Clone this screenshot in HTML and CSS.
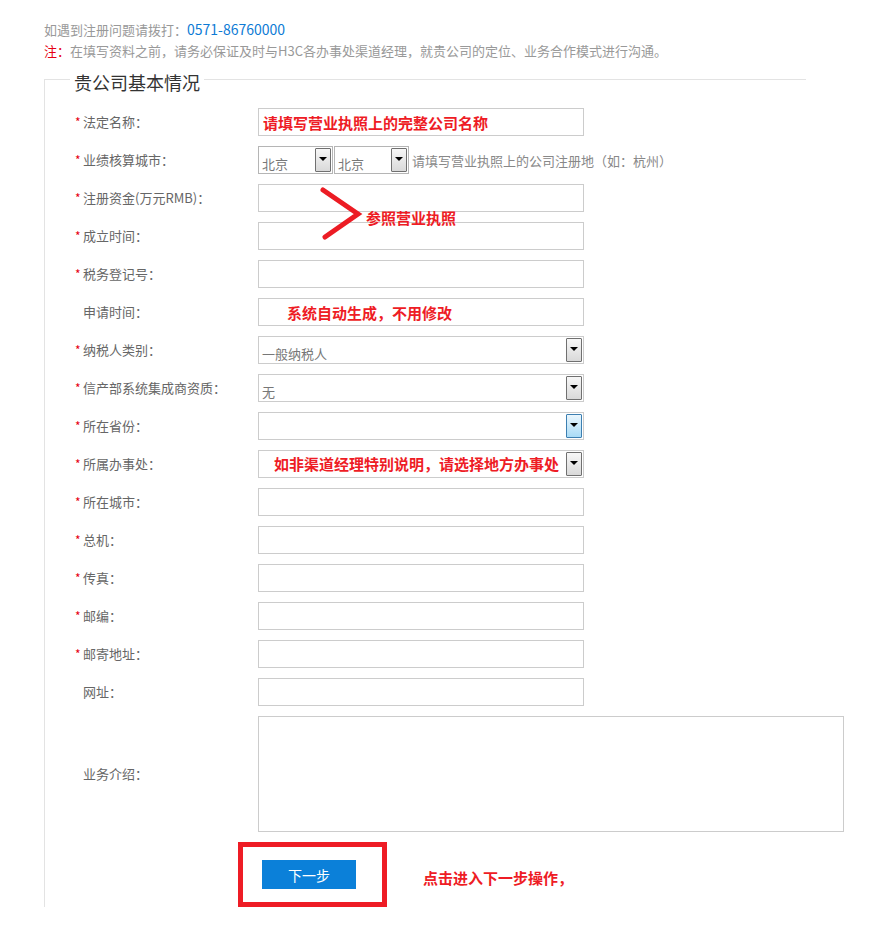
FILE: index.html
```html
<!DOCTYPE html>
<html lang="zh-CN">
<head>
  <meta charset="UTF-8">
  <title>注册 - 贵公司基本情况</title>
  <link rel="stylesheet" href="styles.css">
</head>
<body>
<div class="page">
  <p class="tip">如遇到注册问题请拨打：<span class="phone">0571-86760000</span></p>
  <p class="note"><span class="note-mark">注：</span>在填写资料之前，请务必保证及时与H3C各办事处渠道经理，就贵公司的定位、业务合作模式进行沟通。</p>

  <fieldset class="info">
    <legend>贵公司基本情况</legend>

    <div class="row">
      <label class="label"><i class="req">*</i>法定名称：</label>
      <input class="field mark-text" type="text" value="请填写营业执照上的完整公司名称">
    </div>

    <div class="row">
      <label class="label"><i class="req">*</i>业绩核算城市：</label>
      <div class="select small"><span class="value">北京</span><span class="arrow"></span></div>
      <div class="select small"><span class="value">北京</span><span class="arrow"></span></div>
      <span class="hint">请填写营业执照上的公司注册地（如：杭州）</span>
    </div>

    <div class="row">
      <label class="label"><i class="req">*</i>注册资金(万元RMB)：</label>
      <input class="field" type="text">
      <!-- 标注：箭头 -->
      <svg class="mark-arrow" width="44" height="56" viewBox="0 0 44 56">
        <polyline points="3,3 38,27 5,50" fill="none" stroke="#ec1c24" stroke-width="5" stroke-linecap="round" stroke-linejoin="miter"/>
      </svg>
      <span class="mark-note">参照营业执照</span>
    </div>

    <div class="row">
      <label class="label"><i class="req">*</i>成立时间：</label>
      <input class="field" type="text">
    </div>

    <div class="row">
      <label class="label"><i class="req">*</i>税务登记号：</label>
      <input class="field" type="text">
    </div>

    <div class="row">
      <label class="label"><i class="req blank"></i>申请时间：</label>
      <input class="field mark-text indent" type="text" value="系统自动生成，不用修改">
    </div>

    <div class="row">
      <label class="label"><i class="req">*</i>纳税人类别：</label>
      <div class="select"><span class="value">一般纳税人</span><span class="arrow"></span></div>
    </div>

    <div class="row">
      <label class="label"><i class="req">*</i>信产部系统集成商资质：</label>
      <div class="select"><span class="value">无</span><span class="arrow"></span></div>
    </div>

    <div class="row">
      <label class="label"><i class="req">*</i>所在省份：</label>
      <div class="select"><span class="value"></span><span class="arrow active"></span></div>
    </div>

    <div class="row">
      <label class="label"><i class="req">*</i>所属办事处：</label>
      <div class="select"><span class="value mark-value">如非渠道经理特别说明，请选择地方办事处</span><span class="arrow"></span></div>
    </div>

    <div class="row">
      <label class="label"><i class="req">*</i>所在城市：</label>
      <input class="field" type="text">
    </div>

    <div class="row">
      <label class="label"><i class="req">*</i>总机：</label>
      <input class="field" type="text">
    </div>

    <div class="row">
      <label class="label"><i class="req">*</i>传真：</label>
      <input class="field" type="text">
    </div>

    <div class="row">
      <label class="label"><i class="req">*</i>邮编：</label>
      <input class="field" type="text">
    </div>

    <div class="row">
      <label class="label"><i class="req">*</i>邮寄地址：</label>
      <input class="field" type="text">
    </div>

    <div class="row">
      <label class="label"><i class="req blank"></i>网址：</label>
      <input class="field" type="text">
    </div>

    <div class="row row-area">
      <label class="label"><i class="req blank"></i>业务介绍：</label>
      <textarea class="area"></textarea>
    </div>

    <div class="actions">
      <div class="mark-box">
        <button class="btn-next" type="button">下一步</button>
      </div>
      <span class="action-note">点击进入下一步操作，</span>
    </div>
  </fieldset>
</div>
</body>
</html>
```

FILE: styles.css
```css
* {
  margin: 0;
  padding: 0;
  box-sizing: border-box;
}

body {
  font-family: "Noto Sans CJK SC", "Liberation Sans", sans-serif;
  font-size: 13px;
  color: #666;
  background: #fff;
}

.page {
  padding: 18px 0 0 44px;
}

.tip,
.note {
  line-height: 22px;
  color: #999;
}

.note {
  margin-top: -1px;
}

.phone {
  color: #0d7bd5;
  font-size: 14px;
}

.note-mark {
  color: #e60012;
}

/* 基本情况 */
.info {
  width: 762px;
  min-width: 0;
  margin-top: 3px;
  padding: 14px 0 0 30px;
  border: 0;
  border-top: 1px solid #e3e3e3;
  border-left: 1px solid #e3e3e3;
}

.info legend {
  padding: 5px 4px 0;
  margin-left: -5px;
  font-size: 18px;
  line-height: 24px;
  color: #333;
}

.row {
  position: relative;
  display: flex;
  align-items: center;
  height: 28px;
  margin-bottom: 10px;
}

.label {
  display: flex;
  align-items: center;
  width: 183px;
  flex-shrink: 0;
  color: #666;
  line-height: 20px;
}

.req {
  width: 8px;
  font-style: normal;
  color: #e60012;
  font-size: 12px;
}

.field {
  width: 326px;
  height: 28px;
  border: 1px solid #ccc;
  padding: 0 4px;
  font-family: inherit;
  font-size: 13px;
  color: #666;
  outline: none;
}

.mark-text {
  color: #ee1c25;
  font-weight: bold;
  font-size: 15px;
}

.indent {
  padding-left: 28px;
}

/* 下拉框 */
.select {
  display: flex;
  width: 326px;
  height: 28px;
  padding: 1px;
  border: 1px solid #ccc;
  background: #fff;
}

.select.small {
  width: 75px;
  border-color: #b5b5b5;
  margin-right: 1px;
}

.select .value {
  flex: 1;
  padding: 5px 0 0 2px;
  line-height: 22px;
  color: #777;
  white-space: nowrap;
  overflow: hidden;
}

.select .mark-value {
  padding: 0 0 0 14px;
  line-height: 24px;
  color: #ee1c25;
  font-weight: bold;
  font-size: 15px;
}

.arrow {
  position: relative;
  width: 16px;
  flex-shrink: 0;
  border: 1px solid #707070;
  border-radius: 1px;
  background: linear-gradient(#f7f7f7, #d9d9d9);
}

.arrow::after {
  content: "";
  position: absolute;
  left: 3px;
  top: 50%;
  margin-top: -3px;
  border-style: solid;
  border-width: 4px 4px 0;
  border-color: #000 transparent transparent;
}

.arrow.active {
  border-color: #3c7fb1;
  background: linear-gradient(#eaf6fd, #a9dbf6);
}

.hint {
  margin-left: 2px;
  color: #888;
  white-space: nowrap;
}

/* 标注 */
.mark-arrow {
  position: absolute;
  z-index: 2;
  left: 245px;
  top: 3px;
}

.mark-note {
  position: absolute;
  z-index: 2;
  left: 291px;
  top: 24px;
  line-height: 20px;
  font-size: 15px;
  font-weight: bold;
  color: #ee1c25;
  white-space: nowrap;
}

.row-area {
  height: 116px;
}

.area {
  width: 586px;
  height: 116px;
  flex-shrink: 0;
  border: 1px solid #ccc;
  resize: none;
  outline: none;
}

.actions {
  display: flex;
  align-items: center;
  margin-left: 163px;
}

.mark-box {
  border: 5px solid #ee1c25;
  padding: 13px 26px 13px 19px;
}

.btn-next {
  display: block;
  width: 94px;
  height: 29px;
  border: 0;
  background: #0b80d9;
  color: #fff;
  font-family: inherit;
  font-size: 14px;
  cursor: pointer;
}

.action-note {
  margin: 5px 0 0 36px;
  font-size: 15px;
  font-weight: bold;
  color: #ee1c25;
}
```
